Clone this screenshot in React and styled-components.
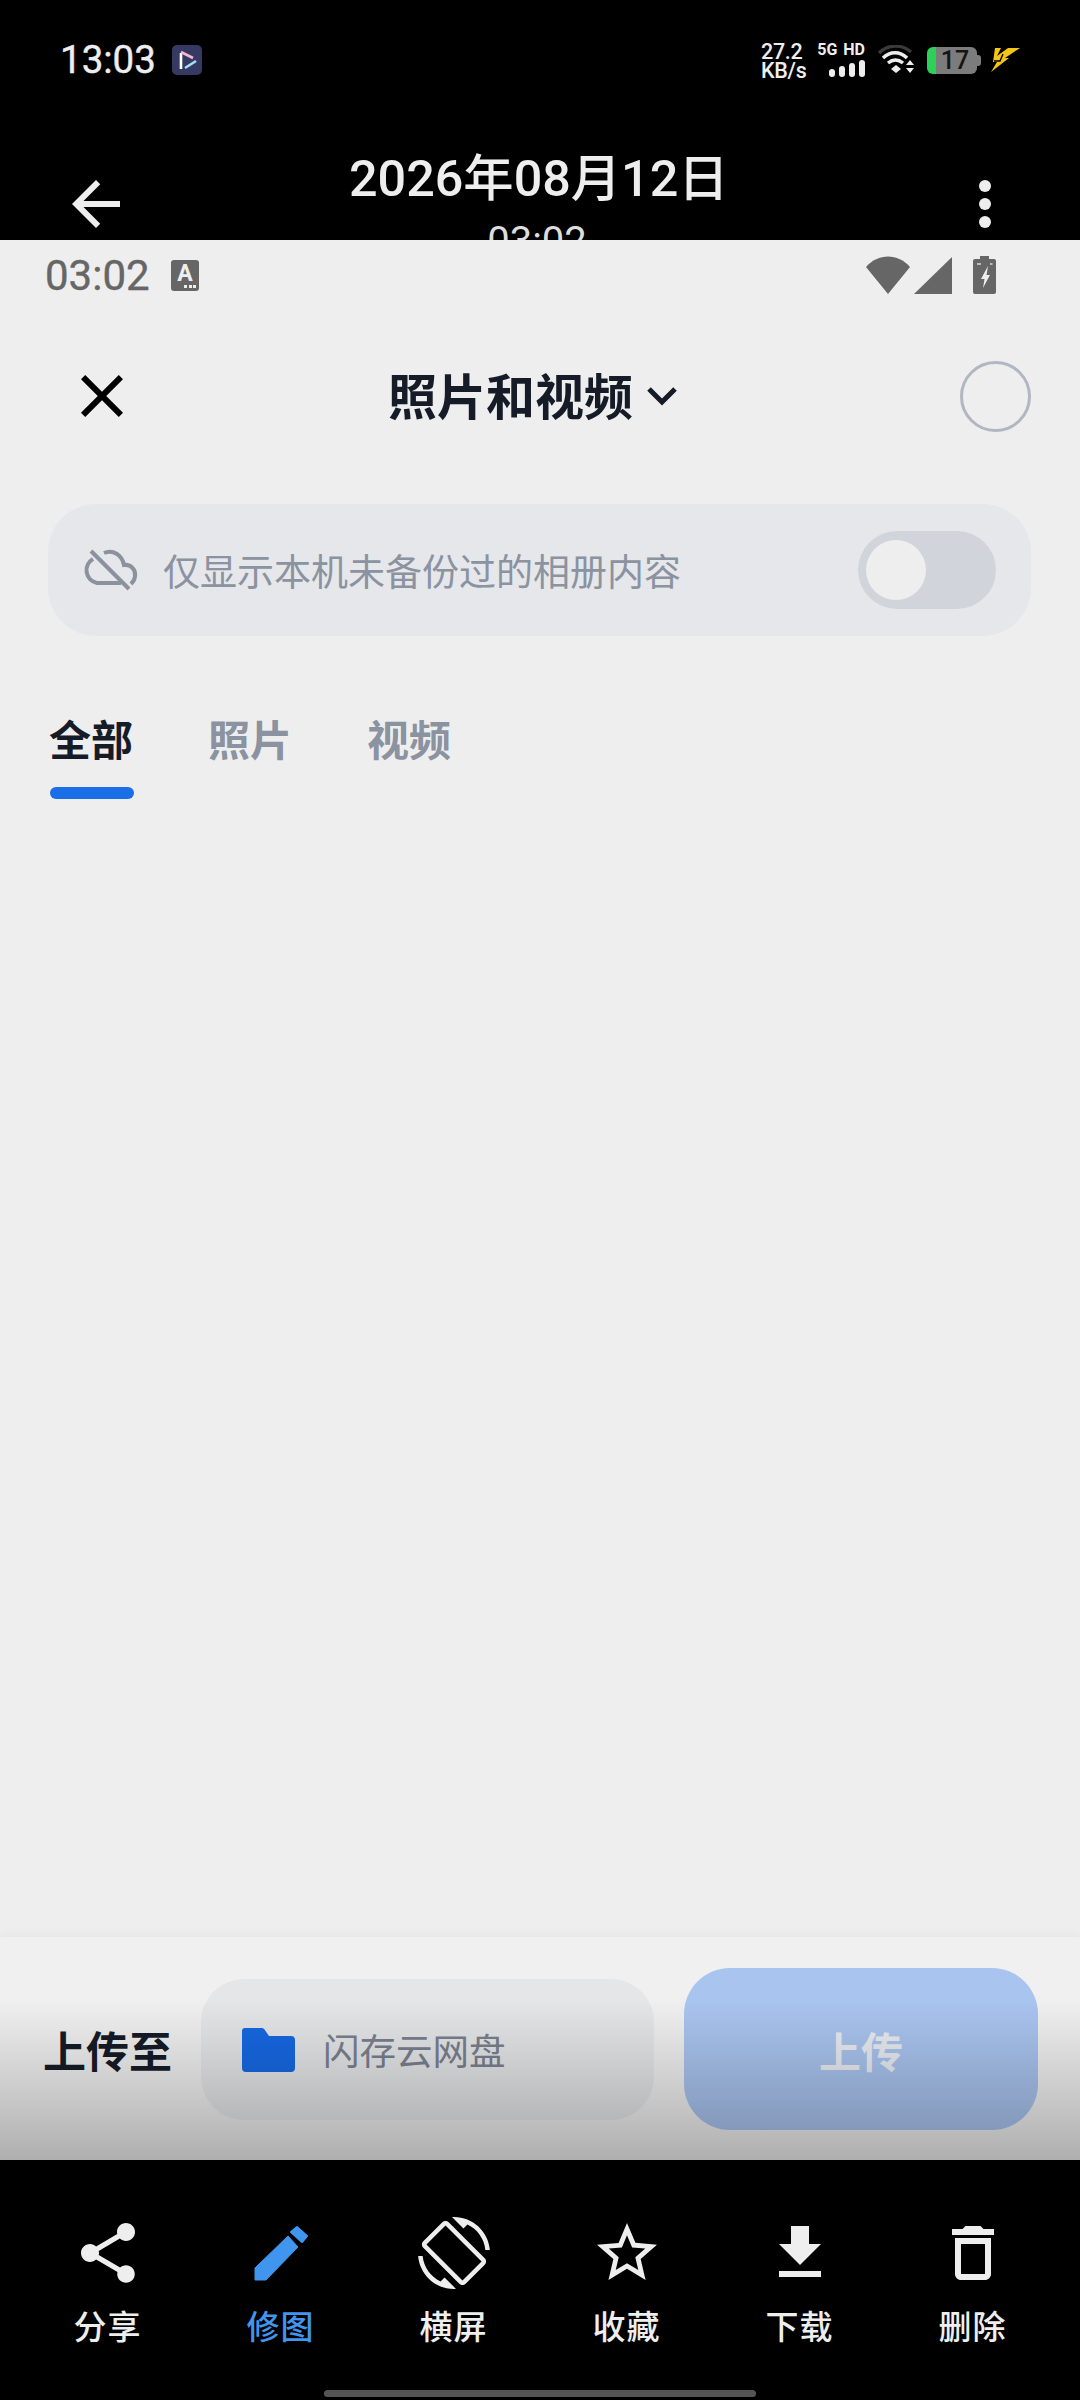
import React from "react";
import styled, { createGlobalStyle } from "styled-components";

const Global = createGlobalStyle`
  html, body { margin: 0; padding: 0; background: #000; }
  * { box-sizing: border-box; }
  #root { width: 1080px; height: 2400px; }
`;

const FONT = `Roboto, "Noto Sans CJK SC", sans-serif`;

const Page = styled.div`
  width: 1080px;
  height: 2400px;
  display: grid;
  grid-template-rows: 240px 1920px 240px;
  font-family: ${FONT};
  overflow: hidden;
`;

/* ---- outer black header ---- */
const OuterHeader = styled.header`
  background: #000;
  color: #eee;
  overflow: hidden;
  padding-top: 42px;
`;
const OuterStatus = styled.div`
  display: flex;
  align-items: center;
  height: 36px;
  padding: 0 60px;
`;
const OuterTime = styled.span`
  font-size: 38.5px;
  font-weight: 400;
  line-height: 36px;
  width: 112px;
  -webkit-text-stroke: 0.4px #eee;
`;
const StatusRight = styled.div`
  margin-left: auto;
  display: flex;
  align-items: center;
`;
const NetSpeed = styled.div`
  width: 57px;
  padding-top: 2px;
  font-size: 21.5px;
  font-weight: 500;
  line-height: 19px;
  letter-spacing: -0.3px;
`;
const Radio = styled.div`
  width: 47px;
  margin-right: 13px;
  display: flex;
  flex-direction: column;
  align-items: flex-end;
  gap: 4px;
`;
const RadioLabel = styled.span`
  font-size: 16px;
  font-weight: 700;
  line-height: 13px;
  white-space: nowrap;
  word-spacing: 2px;
`;
const Bars = styled.div`
  display: flex;
  align-items: flex-end;
  gap: 4px;
`;
const Bar = styled.i`
  display: block;
  width: 6px;
  height: ${(p) => p.$h}px;
  background: #eee;
  border-radius: 3px;
`;
const BatteryPill = styled.div`
  width: 50px;
  height: 27px;
  margin: 0 0 0 12px;
  border-radius: 6px;
  background: linear-gradient(to right, #2ed158 0 9px, #7c7c7c 9px);
  color: #151515;
  font-size: 25px;
  font-weight: 500;
  line-height: 27px;
  text-align: center;
  padding-left: 6px;
`;
const BatteryCap = styled.i`
  display: block;
  width: 4px;
  height: 11px;
  margin-right: 9px;
  border-radius: 0 3px 3px 0;
  background: #7c7c7c;
`;
const NavBar = styled.div`
  display: flex;
  align-items: flex-start;
  margin-top: 68px;
  padding: 0 89px 0 60px;
`;
const BackWrap = styled.div`
  margin-top: 22px;
  height: 72px;
`;
const TitleBlock = styled.div`
  margin-left: 217px;
  margin-top: 3px;
  width: 376px;
  text-align: center;
  white-space: nowrap;
`;
const DateTitle = styled.div`
  font-size: 50.3px;
  font-weight: 500;
  line-height: 60px;
`;
const DateSub = styled.div`
  margin-top: 9px;
  font-size: 40px;
  line-height: 48px;
  color: #ddd;
`;
const Dots = styled.div`
  margin-left: auto;
  margin-top: 34px;
  display: flex;
  flex-direction: column;
  gap: 6px;
`;
const Dot = styled.i`
  display: block;
  width: 12px;
  height: 12px;
  border-radius: 50%;
  background: #eee;
`;

/* ---- light screen ---- */
const Screen = styled.main`
  background: #eeeeee;
  display: flex;
  flex-direction: column;
  min-height: 0;
`;
const InnerStatus = styled.div`
  height: 70px;
  display: flex;
  align-items: center;
  padding: 0 84px 0 45px;
  color: #666;
`;
const InnerTime = styled.span`
  font-size: 42px;
  font-weight: 400;
  width: 126px;
  -webkit-text-stroke: 0.4px #666;
`;
const ABadge = styled.span`
  position: relative;
  width: 28px;
  height: 31px;
  border-radius: 3px;
  background: #666;
  color: #eee;
  font-size: 23px;
  font-weight: 700;
  line-height: 27px;
  text-align: center;
`;
const ABadgeDots = styled.i`
  position: absolute;
  right: 3px;
  bottom: 3px;
  width: 12px;
  height: 3px;
  background: repeating-linear-gradient(to right, #eee 0 3px, transparent 3px 4.5px);
`;
const InnerIcons = styled.div`
  margin-left: auto;
  display: flex;
  align-items: center;
`;
const SheetHeader = styled.div`
  margin-top: 50px;
  height: 72px;
  display: flex;
  align-items: center;
  padding: 0 49px 0 66px;
`;
const SheetTitle = styled.div`
  margin-left: 250px;
  display: flex;
  align-items: center;
  gap: 14px;
  font-size: 49px;
  font-weight: 700;
  color: #151b27;
  line-height: 72px;
  padding-top: 5px;
`;
const Chevron = styled.svg`
  margin-top: -6px;
`;
const RoundCheck = styled.span`
  margin-left: auto;
  width: 71px;
  height: 71px;
  border-radius: 50%;
  border: 3.5px solid #b0b7c3;
`;
const Banner = styled.div`
  margin: 72px 49px 0 48px;
  height: 132px;
  border-radius: 48px;
  background: #e5e7eb;
  display: flex;
  align-items: center;
  padding: 0 35px 0 21px;
`;
const BannerText = styled.span`
  margin-left: 14px;
  font-size: 37px;
  color: #8b92a0;
`;
const Toggle = styled.span`
  margin-left: auto;
  width: 138px;
  height: 78px;
  border-radius: 39px;
  background: #d1d5db;
  padding: 9px 8px;
  display: flex;
`;
const Knob = styled.i`
  display: block;
  width: 60px;
  height: 60px;
  border-radius: 50%;
  background: #eeeeee;
`;
const Tabs = styled.div`
  margin-top: 78px;
  padding-left: 49px;
  display: flex;
  gap: 75px;
`;
const Tab = styled.div`
  display: flex;
  flex-direction: column;
  width: 84px;
  font-size: 42px;
  line-height: 56px;
  font-weight: 700;
  white-space: nowrap;
  color: ${(p) => (p.$active ? "#151b27" : "#8b92a0")};
`;
const TabLine = styled.i`
  display: block;
  height: 12px;
  margin: 17px -1px 0 1px;
  border-radius: 6px;
  background: ${(p) => (p.$active ? "#1a6fe8" : "transparent")};
`;
const Spacer = styled.div`
  flex: 1;
`;

/* ---- upload panel ---- */
const UploadPanel = styled.div`
  position: relative;
  height: 223px;
  padding: 31px 42px 0 43px;
  background: #f0f0f0;
  box-shadow: 0 -3px 10px rgba(0, 0, 0, 0.035);
  display: flex;
  align-items: flex-start;
  &::after {
    content: "";
    position: absolute;
    inset: 0;
    background: linear-gradient(
      to bottom,
      rgba(0, 0, 0, 0) 0,
      rgba(0, 0, 0, 0) 62px,
      rgba(0, 0, 0, 0.27) 100%
    );
    pointer-events: none;
  }
`;
const UploadLabel = styled.span`
  width: 158px;
  height: 162px;
  font-size: 43px;
  font-weight: 700;
  line-height: 170px;
  color: #151b27;
  white-space: nowrap;
`;
const TargetPill = styled.div`
  width: 453px;
  height: 141px;
  margin-top: 11px;
  border-radius: 43px;
  background: #e5e6e8;
  display: flex;
  align-items: center;
  padding-left: 41px;
`;
const TargetText = styled.span`
  margin-left: 28px;
  font-size: 36.5px;
  color: #7a808e;
`;
const UploadButton = styled.div`
  margin-left: 30px;
  width: 354px;
  height: 162px;
  border-radius: 46px;
  background: #a9c4ef;
  color: #e9ecf2;
  font-size: 42px;
  font-weight: 700;
  display: flex;
  align-items: center;
  justify-content: center;
`;

/* ---- bottom toolbar ---- */
const Toolbar = styled.footer`
  background: #000;
  display: flex;
  flex-direction: column;
  padding-top: 57px;
`;
const ToolGrid = styled.div`
  display: grid;
  grid-template-columns: repeat(6, 173px);
  padding-left: 21px;
`;
const Tool = styled.div`
  display: flex;
  flex-direction: column;
  align-items: center;
  gap: 19px;
  color: ${(p) => (p.$active ? "#4096ee" : "#eeeeee")};
`;
const ToolLabel = styled.span`
  font-size: 33px;
  font-weight: 500;
  line-height: 40px;
  letter-spacing: 1px;
`;
const HomeBar = styled.i`
  display: block;
  width: 432px;
  height: 7px;
  margin: auto auto 3px;
  border-radius: 4px;
  background: #555;
`;

const Icon = ({ d }) => (
  <svg width="72" height="72" viewBox="0 0 24 24" fill="currentColor">
    <path d={d} />
  </svg>
);

const tools = [
  { label: "分享", d: "M18 16.08c-.76 0-1.44.3-1.96.77L8.91 12.7c.05-.23.09-.46.09-.7s-.04-.47-.09-.7l7.05-4.11c.54.5 1.25.81 2.04.81 1.66 0 3-1.34 3-3s-1.34-3-3-3-3 1.34-3 3c0 .24.04.47.09.7L8.04 9.81C7.5 9.31 6.79 9 6 9c-1.66 0-3 1.34-3 3s1.34 3 3 3c.79 0 1.5-.31 2.04-.81l7.12 4.16c-.05.21-.08.43-.08.65 0 1.61 1.31 2.92 2.92 2.92 1.61 0 2.92-1.31 2.92-2.92s-1.31-2.92-2.92-2.92z" },
  { label: "修图", active: true },
  { label: "横屏", d: "M16.48 2.52c3.27 1.55 5.61 4.72 5.97 8.48h1.5C23.44 4.84 18.29 0 12 0l-.66.03 3.81 3.81 1.33-1.32zm-6.25-.77c-.59-.59-1.54-.59-2.12 0L1.75 8.11c-.59.59-.59 1.54 0 2.12l12.02 12.02c.59.59 1.54.59 2.12 0l6.36-6.36c.59-.59.59-1.54 0-2.12L10.23 1.75zm4.6 19.44L2.81 9.17l6.36-6.36 12.02 12.02-6.36 6.36zm-7.31.29C4.25 19.94 1.91 16.76 1.55 13H.05C.56 19.16 5.71 24 12 24l.66-.03-3.81-3.81-1.33 1.32z" },
  { label: "收藏", d: "M22 9.24l-7.19-.62L12 2 9.19 8.63 2 9.24l5.46 4.73L5.82 21 12 17.27 18.18 21l-1.63-7.03L22 9.24zM12 15.4l-3.76 2.27 1-4.28-3.32-2.88 4.38-.38L12 6.1l1.71 4.04 4.38.38-3.32 2.88 1 4.28L12 15.4z" },
  { label: "下载", d: "M19 9h-4V3H9v6H5l7 7 7-7zM5 18v2h14v-2H5z" },
  { label: "删除", d: "M6 19c0 1.1.9 2 2 2h8c1.1 0 2-.9 2-2V7H6v12zM8 9h8v10H8V9zm7.5-5l-1-1h-5l-1 1H5v2h14V4z" },
];

const PenIcon = () => (
  <svg width="72" height="72" viewBox="0 0 72 72" fill="currentColor" stroke="currentColor" strokeWidth="1" strokeLinejoin="round">
    <path d="M10 63V51L43 19 53 30 21 63Z" />
    <path d="M52 10 62 19 57 25 46 15Z" strokeWidth="2" />
  </svg>
);

export default function App() {
  return (
    <Page>
      <Global />
      <OuterHeader>
        <OuterStatus>
          <OuterTime>13:03</OuterTime>
          <svg width="30" height="30" viewBox="0 0 30 30" fill="none" strokeWidth="2.6">
            <rect width="30" height="30" rx="5" fill="#363a63" />
            <path d="M9 8V24" stroke="#fff" />
            <path d="M9 7 21 13" stroke="#f4b8d0" />
            <path d="M13 23 24 16" stroke="#a8dcf8" />
          </svg>
          <StatusRight>
            <NetSpeed>
              27.2
              <br />
              KB/s
            </NetSpeed>
            <Radio>
              <RadioLabel>5G HD</RadioLabel>
              <Bars>
                <Bar $h={8} />
                <Bar $h={11} />
                <Bar $h={14} />
                <Bar $h={17} />
              </Bars>
            </Radio>
            <svg width="37" height="30" viewBox="0 0 37 30" fill="none" strokeWidth="3.4">
              <path d="M1 8C10-1 24-1 33 7" stroke="#3a3a3a" />
              <path d="M5 13C12 6 22 6 29 13" stroke="#eee" />
              <path d="M10 18C15 14 20 14 25 18" stroke="#eee" />
              <path d="M13 24 18 20 23 24 18 28Z" fill="#eee" stroke="none" />
              <path d="M32 15 36 20H28ZM28 23H36L32 28Z" fill="#eee" stroke="none" />
            </svg>
            <BatteryPill>17</BatteryPill>
            <BatteryCap />
            <svg width="30" height="26" viewBox="0 0 30 26">
              <path d="M5 1H11L7 9 18 1H30L15 11H19L1 25 7 15H3Z" fill="#f5c518" />
              <path d="M4 14H10L13 7" stroke="#000" strokeWidth="1.4" fill="none" />
            </svg>
          </StatusRight>
        </OuterStatus>
        <NavBar>
          <BackWrap>
            <Icon d="M20 11H7.83l5.59-5.59L12 4l-8 8 8 8 1.41-1.41L7.83 13H20v-2z" />
          </BackWrap>
          <TitleBlock>
            <DateTitle>2026年08月12日</DateTitle>
            <DateSub>03:02</DateSub>
          </TitleBlock>
          <Dots>
            <Dot />
            <Dot />
            <Dot />
          </Dots>
        </NavBar>
      </OuterHeader>

      <Screen>
        <InnerStatus>
          <InnerTime>03:02</InnerTime>
          <ABadge>
            A
            <ABadgeDots />
          </ABadge>
          <InnerIcons>
            <svg width="44" height="38" viewBox="0 0 44 38" fill="#666">
              <path d="M0 11C12-3 32-3 44 11L22 38Z" />
            </svg>
            <svg width="38" height="37" viewBox="0 0 38 37" fill="#666" style={{ marginLeft: 4 }}>
              <path d="M38 0V37H0Z" />
            </svg>
            <svg width="23" height="38" viewBox="0 0 23 38" style={{ marginLeft: 21 }}>
              <path d="M7 0H16V3H21A2 2 0 0 1 23 5V36A2 2 0 0 1 21 38H2A2 2 0 0 1 0 36V5A2 2 0 0 1 2 3H7Z" fill="#666" />
              <path d="M15 10 8 23H11.5L10 32 17 19H13.5Z" fill="#eee" />
              <path d="M4 8H8M17 8H19.5" stroke="#bbb" strokeWidth="2" />
            </svg>
          </InnerIcons>
        </InnerStatus>

        <SheetHeader>
          <Icon d="M19 6.41 17.59 5 12 10.59 6.41 5 5 6.41 10.59 12 5 17.59 6.41 19 12 13.41 17.59 19 19 17.59 13.41 12z" />
          <SheetTitle>
            照片和视频
            <Chevron width="30" height="20" viewBox="0 0 30 20" fill="none" stroke="#151b27" strokeWidth="5">
              <path d="M2 3 15 16 28 3" />
            </Chevron>
          </SheetTitle>
          <RoundCheck />
        </SheetHeader>

        <Banner>
          <svg width="80" height="64" viewBox="0 0 80 64" fill="none" stroke="#8b919d" strokeWidth="4">
            <path d="M24 21A13 13 0 0 0 28 45H52" />
            <path d="M35 15C44 11 53 17 55 27 62 26 67 32 66 38 66 41 64 44 62 46" />
            <path d="M22 13 60 51" />
          </svg>
          <BannerText>仅显示本机未备份过的相册内容</BannerText>
          <Toggle>
            <Knob />
          </Toggle>
        </Banner>

        <Tabs>
          <Tab $active>
            全部
            <TabLine $active />
          </Tab>
          <Tab>
            照片
            <TabLine />
          </Tab>
          <Tab>
            视频
            <TabLine />
          </Tab>
        </Tabs>

        <Spacer />

        <UploadPanel>
          <UploadLabel>上传至</UploadLabel>
          <TargetPill>
            <svg width="53" height="44" viewBox="0 0 53 44" fill="#1668e3">
              <path d="M3 0H20A3 3 0 0 1 22.5 1.5L27 8H49A4 4 0 0 1 53 12V40A4 4 0 0 1 49 44H4A4 4 0 0 1 0 40V3A3 3 0 0 1 3 0Z" />
            </svg>
            <TargetText>闪存云网盘</TargetText>
          </TargetPill>
          <UploadButton>上传</UploadButton>
        </UploadPanel>
      </Screen>

      <Toolbar>
        <ToolGrid>
          {tools.map((t) => (
            <Tool key={t.label} $active={t.active}>
              {t.d ? <Icon d={t.d} /> : <PenIcon />}
              <ToolLabel>{t.label}</ToolLabel>
            </Tool>
          ))}
        </ToolGrid>
        <HomeBar />
      </Toolbar>
    </Page>
  );
}
